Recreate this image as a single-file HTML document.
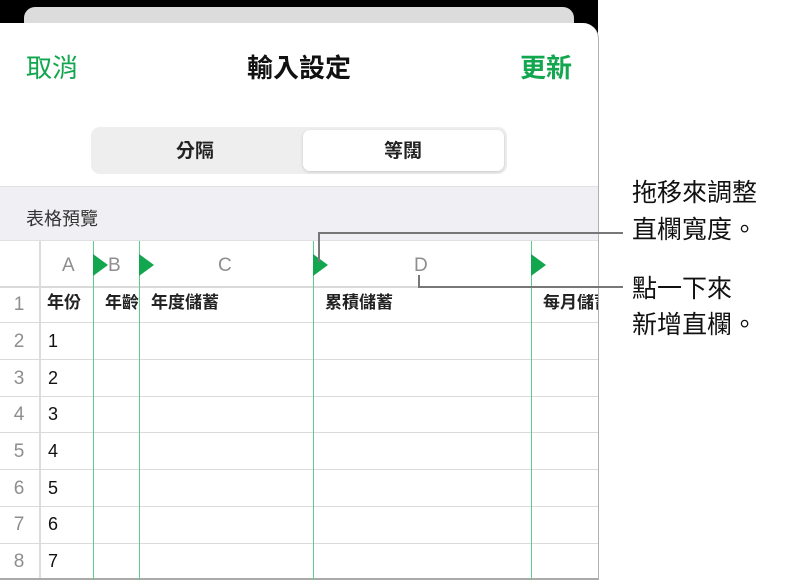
<!DOCTYPE html>
<html><head><meta charset="utf-8"><style>
*{margin:0;padding:0;box-sizing:border-box}
html,body{width:785px;height:580px;overflow:hidden}
body{background:#fff;position:relative;font-family:"Liberation Sans","Noto Sans CJK TC",sans-serif}
.a{position:absolute}
.t{position:absolute;white-space:nowrap;line-height:1}
.hl{position:absolute;left:0;width:598px;height:1px;background:#dadada}
.gl{position:absolute;top:241px;width:1px;height:339px;background:#5fcb8c;z-index:2}
.tri{position:absolute;top:254px;width:0;height:0;border-top:11px solid transparent;border-bottom:11px solid transparent;border-left:15px solid #12a64e;z-index:3}
.rn{position:absolute;left:0;width:38px;text-align:center;color:#8e8e8e;font-size:19px;line-height:1}
.rv{position:absolute;left:48px;font-size:18px;color:#111;line-height:1}
.ann{position:absolute;left:632px;font-size:25px;color:#111;line-height:1}
</style></head><body>
<div class="a" style="left:0;top:0;width:598px;height:60px;background:#000"></div>
<div class="a" style="left:24px;top:7px;width:550px;height:40px;background:#dcdcdc;border-radius:11px"></div>
<div class="a" style="left:-20px;top:23px;width:619px;height:557px;background:#fff;border-radius:16px 16px 0 0;border-right:1px solid #b0b0b0"></div>
<div class="t" style="left:26px;top:55px;font-size:26px;color:#12a64e">取消</div>
<div class="t" style="left:247px;top:55px;font-size:26px;font-weight:bold;color:#111">輸入設定</div>
<div class="t" style="left:520px;top:55px;font-size:26px;font-weight:bold;color:#12a64e">更新</div>
<div class="a" style="left:91px;top:127px;width:416px;height:47px;background:#eeeeef;border-radius:9px"></div>
<div class="a" style="left:303px;top:130px;width:201px;height:41px;background:#fff;border-radius:7px;box-shadow:0 1px 3px rgba(0,0,0,.15)"></div>
<div class="t" style="left:176px;top:142px;font-size:19px;font-weight:bold;color:#222">分隔</div>
<div class="t" style="left:384px;top:142px;font-size:19px;font-weight:bold;color:#222">等闊</div>
<div class="a" style="left:0;top:186px;width:598px;height:55px;background:#f0f0f4;border-top:1px solid #e0e0e4;border-bottom:1px solid #e0e0e4"></div>
<div class="t" style="left:26px;top:210px;font-size:18px;color:#333">表格預覽</div>
<div class="a" style="left:39px;top:241px;width:2px;height:339px;background:#dcdcdc"></div>
<div class="hl" style="top:286px;height:2px"></div>
<div class="hl" style="top:322px"></div><div class="hl" style="top:359px"></div><div class="hl" style="top:396px"></div><div class="hl" style="top:432px"></div><div class="hl" style="top:469px"></div><div class="hl" style="top:506px"></div><div class="hl" style="top:543px"></div>
<div class="a" style="left:0;top:578px;width:598px;height:2px;background:#aaa"></div>
<div class="gl" style="left:93px"></div><div class="gl" style="left:139px"></div><div class="gl" style="left:313px"></div><div class="gl" style="left:531px"></div>
<div class="tri" style="left:93px"></div><div class="tri" style="left:139px"></div><div class="tri" style="left:313px"></div><div class="tri" style="left:531px"></div>
<div class="t" style="left:62px;top:256px;font-size:19px;color:#8e8e8e">A</div>
<div class="t" style="left:108px;top:256px;font-size:19px;color:#8e8e8e">B</div>
<div class="t" style="left:218px;top:256px;font-size:19px;color:#8e8e8e">C</div>
<div class="t" style="left:414px;top:256px;font-size:19px;color:#8e8e8e">D</div>
<div class="t" style="left:47px;top:294px;font-size:17px;font-weight:bold;color:#222">年份</div>
<div class="t" style="left:105px;top:294px;font-size:17px;font-weight:bold;color:#222;width:34px;overflow:hidden">年齡</div>
<div class="t" style="left:151px;top:294px;font-size:17px;font-weight:bold;color:#222">年度儲蓄</div>
<div class="t" style="left:325px;top:294px;font-size:17px;font-weight:bold;color:#222">累積儲蓄</div>
<div class="t" style="left:543px;top:294px;font-size:17px;font-weight:bold;color:#222;width:55px;overflow:hidden">每月儲蓄</div>
<div class="rn" style="top:295px">1</div>
<div class="rn" style="top:332px">2</div><div class="rv" style="top:332px">1</div>
<div class="rn" style="top:369px">3</div><div class="rv" style="top:369px">2</div>
<div class="rn" style="top:405px">4</div><div class="rv" style="top:405px">3</div>
<div class="rn" style="top:442px">5</div><div class="rv" style="top:442px">4</div>
<div class="rn" style="top:479px">6</div><div class="rv" style="top:479px">5</div>
<div class="rn" style="top:515px">7</div><div class="rv" style="top:515px">6</div>
<div class="rn" style="top:552px">8</div><div class="rv" style="top:552px">7</div>
<div class="a" style="left:318px;top:232px;width:305px;height:2px;background:#777;z-index:4"></div>
<div class="a" style="left:318px;top:232px;width:2px;height:30px;background:#777;z-index:4"></div>
<div class="a" style="left:418px;top:275px;width:2px;height:13px;background:#777;z-index:4"></div>
<div class="a" style="left:418px;top:286px;width:205px;height:2px;background:#777;z-index:4"></div>
<div class="ann" style="top:181px">拖移來調整</div>
<div class="ann" style="top:218px">直欄寬度。</div>
<div class="ann" style="top:277px">點一下來</div>
<div class="ann" style="top:313px">新增直欄。</div>
</body></html>
